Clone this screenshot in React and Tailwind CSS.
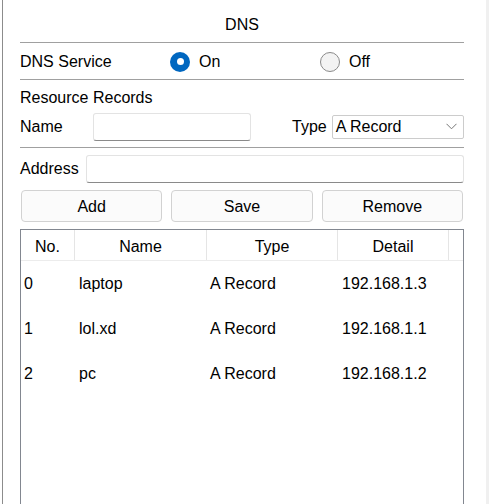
import React, { useState } from 'react';

const font = { fontFamily: '"Liberation Sans", Arial, sans-serif' };

const Radio = ({ checked, label, onClick }) => (
    <button onClick={onClick} className="flex items-center gap-[9px] text-[16px] text-black">
        {checked ? (
            <span className="w-[20px] h-[20px] rounded-full bg-[#0067c0] flex items-center justify-center">
                <span className="w-[7px] h-[7px] rounded-full bg-white" />
            </span>
        ) : (
            <span className="w-[20px] h-[20px] rounded-full bg-[#f3f3f3] border border-[#8a8a8a]" />
        )}
        <span>{label}</span>
    </button>
);

const Btn = ({ children }) => (
    <button className="h-[32px] flex-1 rounded-[4px] border border-[#d2d2d2] bg-[#fbfbfb] text-[16px] text-black pt-px">
        {children}
    </button>
);

const records = [
    { no: 0, name: 'laptop', type: 'A Record', detail: '192.168.1.3' },
    { no: 1, name: 'lol.xd', type: 'A Record', detail: '192.168.1.1' },
    { no: 2, name: 'pc', type: 'A Record', detail: '192.168.1.2' },
];

export default function App() {
    const [on, setOn] = useState(true);

    return (
        <div className="flex h-[504px] w-[489px] bg-white overflow-hidden text-black" style={font}>
            <div className="w-[2px]" />
            <div className="w-px bg-[#8c8c8c]" />
            <div className="w-[17px]" />

            <div className="w-[444px] flex flex-col text-[16px]">
                {/* title */}
                <div className="h-[42px] pt-[14px] text-center leading-[22px]">DNS</div>
                <div className="h-px bg-[#a0a0a0]" />

                {/* service toggle */}
                <div className="h-[36px] flex items-center pt-[1px]">
                    <span className="w-[150px]">DNS Service</span>
                    <div className="w-[150px]">
                        <Radio checked={on} label="On" onClick={() => setOn(true)} />
                    </div>
                    <Radio checked={!on} label="Off" onClick={() => setOn(false)} />
                </div>
                <div className="h-px bg-[#a0a0a0]" />

                <div className="h-[29px] pt-[7px] leading-[22px]">Resource Records</div>

                {/* name / type */}
                <div className="h-[35px] flex items-center">
                    <span className="w-[73px]">Name</span>
                    <input className="w-[158px] h-[28px] rounded-[3px] border border-[#e3e3e3] border-b-[#8a8a8a] bg-white outline-none px-1" />
                    <span className="ml-[41px] mr-[5px]">Type</span>
                    <div className="flex-1 h-[24px] border border-[#cccccc] rounded-[2px] flex items-center justify-between pl-[3px] pr-[6px]">
                        <span className="leading-none">A Record</span>
                        <svg width="11" height="7" viewBox="0 0 11 7" fill="none">
                            <path d="M0.5 0.8 L5.5 5.8 L10.5 0.8" stroke="#777" strokeWidth="1" />
                        </svg>
                    </div>
                </div>
                <div className="h-px bg-[#a0a0a0] mt-[3px]" />

                {/* address */}
                <div className="h-[42px] flex items-center">
                    <span className="w-[66px]">Address</span>
                    <input className="flex-1 h-[28px] rounded-[3px] border border-[#e3e3e3] border-b-[#8a8a8a] bg-white outline-none px-1" />
                </div>

                {/* buttons */}
                <div className="flex gap-[9px] px-px">
                    <Btn>Add</Btn>
                    <Btn>Save</Btn>
                    <Btn>Remove</Btn>
                </div>

                {/* table */}
                <div className="mt-[7px] flex-1 border border-[#828790] border-b-0">
                    <div className="h-[31px] flex border-b border-[#ececec]">
                        <div className="w-[54px] pt-[3px] border-r border-[#e5e5e5] flex items-center justify-center">No.</div>
                        <div className="w-[132px] pt-[3px] border-r border-[#e5e5e5] flex items-center justify-center">Name</div>
                        <div className="w-[131px] pt-[3px] border-r border-[#e5e5e5] flex items-center justify-center">Type</div>
                        <div className="w-[111px] pt-[3px] border-r border-[#e5e5e5] flex items-center justify-center">Detail</div>
                    </div>
                    {records.map(r => (
                        <div key={r.no} className="h-[45px] flex items-center">
                            <div className="w-[54px] pl-[3px]">{r.no}</div>
                            <div className="w-[132px] pl-[4px]">{r.name}</div>
                            <div className="w-[131px] pl-[3px]">{r.type}</div>
                            <div className="w-[111px] pl-[4px]">{r.detail}</div>
                        </div>
                    ))}
                </div>
            </div>

            <div className="w-[22px]" />
            <div className="w-[3px] bg-[#f0f0f0]" />
        </div>
    );
}
